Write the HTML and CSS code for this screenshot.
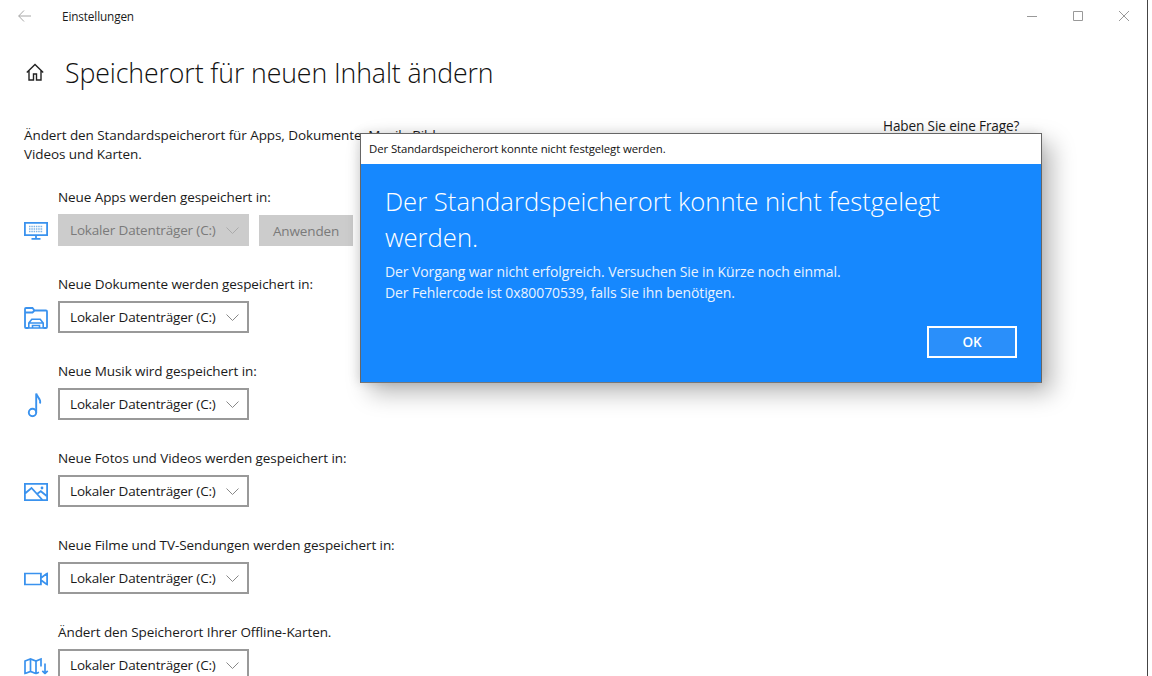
FILE: index.html
```html
<!DOCTYPE html>
<html lang="de">
<head>
<meta charset="utf-8">
<title>Einstellungen</title>
<link rel="stylesheet" href="styles.css">
</head>
<body>
<div class="window">
  <header class="titlebar">
    <svg class="back" width="13" height="12" viewBox="0 0 13 12"><path d="M6 .5.700 6 6 11.500M.700 6H13" fill="none" stroke="#a6a6a6"/></svg>
    <span class="app-name">Einstellungen</span>
    <div class="caption">
      <svg width="12" height="12" viewBox="0 0 12 12"><path d="M1 6.500h10" stroke="#999"/></svg>
      <svg width="12" height="12" viewBox="0 0 12 12"><path d="M1.500 1.500h9v9h-9z" fill="none" stroke="#999"/></svg>
      <svg width="12" height="12" viewBox="0 0 12 12"><path d="M1 1l10 10M11 1 1 11" stroke="#999" fill="none"/></svg>
    </div>
  </header>

  <div class="page-head">
    <svg class="home" width="18" height="18" viewBox="0 0 18 18"><path d="M.800 9.500 9 1.500l8.200 8M3 7.500V17h4.500v-6h3v6H15V7.500" fill="none" stroke="#222" stroke-width="1.400"/></svg>
    <h1>Speicherort für neuen Inhalt ändern</h1>
  </div>

  <div class="content">
    <main class="settings">
      <p class="intro">Ändert den Standardspeicherort für Apps, Dokumente, Musik, Bilder,<br>Videos und Karten.</p>

      <section class="row">
        <div class="label">Neue Apps werden gespeichert in:</div>
        <div class="control">
          <svg class="icon" width="24" height="18" viewBox="0 0 24 18"><path d="M.900.900h22.200v12.200H.900zM12 13v3.300M7.500 16.800h9" fill="none" stroke="#3a92ee" stroke-width="1.800"/><path d="M5 4.500h14M5 7h14M5 9.500h14" stroke="#7fb4e6" stroke-width="1.400" stroke-dasharray="1.500 .8"/></svg>
          <div class="select disabled"><span>Lokaler Datenträger (C:)</span><svg class="chev" width="13" height="7" viewBox="0 0 13 7"><path d="M.500.500l6 6 6-6" fill="none" stroke="#aaa"/></svg></div>
          <div class="apply">Anwenden</div>
        </div>
      </section>

      <section class="row">
        <div class="label">Neue Dokumente werden gespeichert in:</div>
        <div class="control">
          <svg class="icon" width="24" height="22" viewBox="0 0 24 22"><path d="M4.500 21H2a1 1 0 0 1-1-1V2a1 1 0 0 1 1-1h6.500l2 2.500H22a1 1 0 0 1 1 1V20a1 1 0 0 1-1 1h-2.500M1 5.500h7.500l2-2" fill="none" stroke="#3a92ee" stroke-width="1.800"/><path d="M4.800 21v-5l3-3.800h8.400l3 3.800v5zM4.800 16h14.400M8.500 21v-2.500h7V21" fill="none" stroke="#3a92ee" stroke-width="1.600"/></svg>
          <div class="select"><span>Lokaler Datenträger (C:)</span><svg class="chev" width="13" height="7" viewBox="0 0 13 7"><path d="M.500.500l6 6 6-6" fill="none" stroke="#888"/></svg></div>
        </div>
      </section>

      <section class="row">
        <div class="label">Neue Musik wird gespeichert in:</div>
        <div class="control">
          <svg class="icon icon-music" width="16" height="25" viewBox="0 0 16 25"><circle cx="5.500" cy="20" r="3.700" fill="none" stroke="#3a92ee" stroke-width="1.900"/><path d="M9.200 20V1c.5 3.500 5.300 5 3.800 10" fill="none" stroke="#3a92ee" stroke-width="1.900"/></svg>
          <div class="select"><span>Lokaler Datenträger (C:)</span><svg class="chev" width="13" height="7" viewBox="0 0 13 7"><path d="M.500.500l6 6 6-6" fill="none" stroke="#888"/></svg></div>
        </div>
      </section>

      <section class="row">
        <div class="label">Neue Fotos und Videos werden gespeichert in:</div>
        <div class="control">
          <svg class="icon" width="24" height="18" viewBox="0 0 24 18"><path d="M.900.900h22.200v16.200H.900zM1 10.500 7.500 5 18.500 17M13 11l3.800-2.800 6.200 5" fill="none" stroke="#3a92ee" stroke-width="1.800"/><circle cx="18" cy="5" r="1.400" fill="#3a92ee"/></svg>
          <div class="select"><span>Lokaler Datenträger (C:)</span><svg class="chev" width="13" height="7" viewBox="0 0 13 7"><path d="M.500.500l6 6 6-6" fill="none" stroke="#888"/></svg></div>
        </div>
      </section>

      <section class="row">
        <div class="label">Neue Filme und TV-Sendungen werden gespeichert in:</div>
        <div class="control">
          <svg class="icon" width="24" height="13" viewBox="0 0 24 13"><path d="M.900.900h16v11.200h-16zM16.900 5.500 23.100.900v11.200L16.900 7.500" fill="none" stroke="#3a92ee" stroke-width="1.800"/></svg>
          <div class="select"><span>Lokaler Datenträger (C:)</span><svg class="chev" width="13" height="7" viewBox="0 0 13 7"><path d="M.500.500l6 6 6-6" fill="none" stroke="#888"/></svg></div>
        </div>
      </section>

      <section class="row">
        <div class="label">Ändert den Speicherort Ihrer Offline-Karten.</div>
        <div class="control">
          <svg class="icon" width="25" height="17" viewBox="0 0 25 17"><path d="M17 9V1.500l-5 2-5.500-2-5.500 2v12.500l5.500-2 5.500 2 3-1.200M6.500 1.500v12.500M12 3.500v12.500" fill="none" stroke="#3a92ee" stroke-width="1.700"/><path d="M21 6v10M18.300 13.300 21 16l2.700-2.700" fill="none" stroke="#3a92ee" stroke-width="1.700"/></svg>
          <div class="select"><span>Lokaler Datenträger (C:)</span><svg class="chev" width="13" height="7" viewBox="0 0 13 7"><path d="M.500.500l6 6 6-6" fill="none" stroke="#888"/></svg></div>
        </div>
      </section>
    </main>
    <aside class="help">Haben Sie eine Frage?</aside>
  </div>

  <div class="dialog">
    <div class="dialog-title">Der Standardspeicherort konnte nicht festgelegt werden.</div>
    <div class="dialog-body">
      <h2>Der Standardspeicherort konnte nicht festgelegt werden.</h2>
      <p>Der Vorgang war nicht erfolgreich. Versuchen Sie in Kürze noch einmal.<br>Der Fehlercode ist 0x80070539, falls Sie ihn benötigen.</p>
      <div class="dialog-actions"><div class="ok">OK</div></div>
    </div>
  </div>
</div>
</body>
</html>
```
FILE: styles.css
```css
* { box-sizing: border-box; }
html, body { margin: 0; height: 100%; overflow: hidden; background: #fff; }
body { font-family: "Open Sans", "Noto Sans", sans-serif; color: #1a1a1a; }
.window { position: relative; width: 1148px; height: 676px; border-right: 1px solid #444; overflow: hidden; background: #fff; }

.titlebar { display: flex; align-items: center; height: 32px; padding-left: 18px; }
.back { flex: none; }
.app-name { margin-left: 31px; font-size: 11.800px; letter-spacing: -.15px; }
.caption { display: flex; gap: 34px; margin-left: auto; padding-right: 17px; }

.page-head { display: flex; align-items: center; height: 54px; margin-top: 13px; padding-left: 26px; }
.home { flex: none; }
h1 { margin: 0 0 0 21px; font-size: 26.700px; font-weight: 300; letter-spacing: -.1px; color: #111; }

.content { display: flex; padding-left: 24px; }
.settings { width: 859px; flex: none; }
.intro { margin: 27px 0 0; font-size: 13.500px; line-height: 19px; letter-spacing: -.08px; white-space: nowrap; }
.help { font-size: 13.600px; letter-spacing: -.13px; margin-top: 17px; line-height: 19px; }

.row { margin-left: 34px; }
.label { height: 49px; padding-top: 24px; font-size: 13.500px; line-height: 19px; letter-spacing: -.08px; white-space: nowrap; }
.control { position: relative; display: flex; align-items: flex-start; gap: 10px; height: 38px; padding-top: 1px; }
.icon { position: absolute; left: -34px; top: 18px; transform: translateY(-50%); }
.icon-music { left: -31px; }
.select { display: flex; align-items: center; justify-content: space-between; width: 191px; height: 32px; padding: 0 8px 0 10px; border: 2px solid #999; font-size: 13.500px; letter-spacing: -.16px; white-space: nowrap; }
.select.disabled { background: #ccc; border-color: #ccc; color: #7a7a7a; }
.apply { display: flex; align-items: center; justify-content: center; width: 94px; height: 31px; margin-top: 1px; background: #ccc; color: #7a7a7a; font-size: 13.500px; letter-spacing: -.13px; }

.dialog { position: absolute; left: 360px; top: 133px; width: 682px; height: 250px; border: 1px solid #666; border-bottom-color: #777; box-shadow: 10px 10px 22px rgba(0,0,0,.28), -2px 0 10px rgba(0,0,0,.12); display: flex; flex-direction: column; background: #1688fe; }
.dialog-title { height: 30px; padding-left: 8px; line-height: 29px; background: #fff; font-size: 11.400px; letter-spacing: -.1px; color: #111; }
.dialog-body { flex: 1; padding: 20px 24px 24px; color: #fff; display: flex; flex-direction: column; }
h2 { margin: 0; width: 600px; font-size: 25.650px; font-weight: 300; line-height: 36px; }
.dialog-body p { margin: 5px 0 0; font-size: 14px; line-height: 21px; letter-spacing: -.1px; color: #e9f3ff; }
.dialog-actions { display: flex; justify-content: flex-end; margin-top: auto; }
.ok { display: flex; align-items: center; justify-content: center; width: 90px; height: 32px; border: 2px solid #fff; background: #2a8ffa; font-size: 13.500px; font-weight: 600; }
```
